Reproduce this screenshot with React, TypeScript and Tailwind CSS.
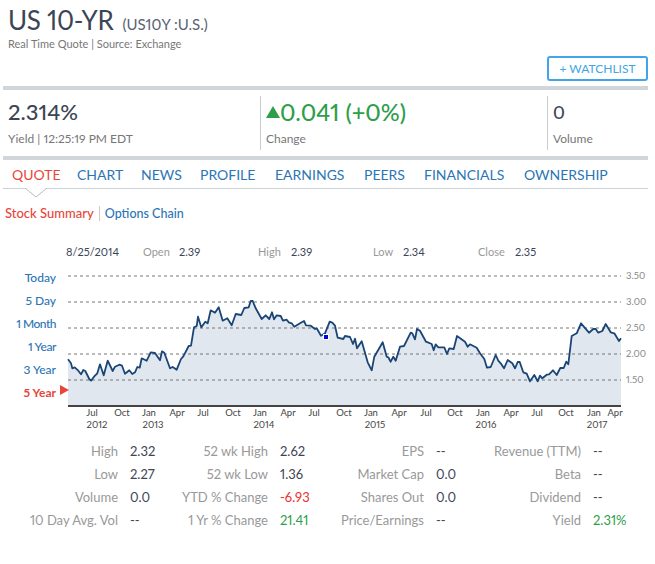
const lineZoomA =
  "204,373 213,385 217,400 224,397 235,407 243,418 250,405 256,408 268,432 273,437 282,425 292,415 300,388 311,421 323,377 338,408 345,395 358,389 366,392 375,416 388,406 397,417 405,412 412,396 419,398 425,370 440,377 452,352 465,354 480,376 486,349 493,353 510,400 518,396 530,404 543,372 550,364 566,333 573,332 582,277 590,273 594,245 604,277 616,260 623,265 632,226 645,233 656,217 668,257 682,250 695,271 707,237 724,240 733,219 746,217 752,198 758,198 767,220 785,252 797,241 808,252 816,232 822,253 830,241 842,243 849,257 860,254 866,262 875,265 883,275 900,265 912,258 918,271 932,272 945,282 950,280 963,302 975,295"
const lineZoomB =
  "14,260 22,263 30,272 38,308 55,312 60,303 75,306 84,327 90,311 96,340 110,319 128,382 140,406 148,365 173,322 185,365 190,367 197,380 205,365 212,377 225,335 237,333 257,293 262,295 270,313 276,282 285,287 303,320 320,327 326,346 332,328 340,337 358,337 366,357 373,340 386,342 396,303 420,320 428,335 435,328 455,338 465,355 478,372 486,398 497,396 512,360 520,377 527,385 537,400 548,375 562,385 570,400 578,381 584,381 595,412 605,416 615,439 628,420 638,439 645,422 652,430 665,419 672,418 684,406 695,420 706,399 716,399 724,380 730,388 740,303 755,295 768,265 792,293 805,282 812,282 820,293 832,288 842,267 857,292 868,295 882,318 888,310"

const toPoints = (raw: string, offset: number) =>
  raw.split(" ").map((p) => {
    const [x, y] = p.split(",").map(Number)
    return [(x + offset) / 3, 235 + y / 3] as const
  })

const points = [...toPoints(lineZoomA, 0), ...toPoints(lineZoomB, 975)]
const linePath = points.map(([x, y]) => `${x.toFixed(1)},${y.toFixed(1)}`).join(" ")
const areaPath = `68,405 ${linePath} 621,405`

const gridLines = [
  { y: 276, label: "3.50" },
  { y: 302, label: "3.00" },
  { y: 328, label: "2.50" },
  { y: 354, label: "2.00" },
  { y: 380, label: "1.50" },
]
const months: [string, number][] = [
  ["Jul", 92], ["Oct", 122], ["Jan", 149], ["Apr", 177], ["Jul", 203], ["Oct", 233], ["Jan", 260],
  ["Apr", 288], ["Jul", 314], ["Oct", 344], ["Jan", 371], ["Apr", 399], ["Jul", 426], ["Oct", 455],
  ["Jan", 483], ["Apr", 511], ["Jul", 537], ["Oct", 566], ["Jan", 594], ["Apr", 615],
]
const years: [string, number][] = [
  ["2012", 97], ["2013", 153], ["2014", 264], ["2015", 375], ["2016", 486], ["2017", 597],
]

const tabs = [
  { label: "Chart", cls: "w-[64px]" },
  { label: "News", cls: "w-[59px]" },
  { label: "Profile", cls: "w-[75px]" },
  { label: "Earnings", cls: "w-[89px]" },
  { label: "Peers", cls: "w-[60px]" },
  { label: "Financials", cls: "w-[100px]" },
  { label: "Ownership", cls: "" },
]
const ranges = [
  { label: "Today", cls: "" },
  { label: "5 Day", cls: "" },
  { label: "1 Month", cls: "tracking-[-0.5px]" },
  { label: "1 Year", cls: "tracking-[-0.4px]" },
  { label: "3 Year", cls: "" },
]
const ohlc = [
  { label: "Open", value: "2.39", cls: "w-[115px]", labelCls: "w-[36px]" },
  { label: "High", value: "2.39", cls: "w-[115px]", labelCls: "w-[33px]" },
  { label: "Low", value: "2.34", cls: "w-[105px]", labelCls: "w-[30px]" },
  { label: "Close", value: "2.35", cls: "w-[100px]", labelCls: "w-[37px]" },
]

const stats: { label: string; value: string; cls?: string }[][] = [
  [
    { label: "High", value: "2.32" },
    { label: "52 wk High", value: "2.62" },
    { label: "EPS", value: "--" },
    { label: "Revenue (TTM)", value: "--" },
  ],
  [
    { label: "Low", value: "2.27" },
    { label: "52 wk Low", value: "1.36" },
    { label: "Market Cap", value: "0.0" },
    { label: "Beta", value: "--" },
  ],
  [
    { label: "Volume", value: "0.0" },
    { label: "YTD % Change", value: "-6.93", cls: "text-[#ee2e2e]" },
    { label: "Shares Out", value: "0.0" },
    { label: "Dividend", value: "--" },
  ],
  [
    { label: "10 Day Avg. Vol", value: "--" },
    { label: "1 Yr % Change", value: "21.41", cls: "text-[#2e9e4a]" },
    { label: "Price/Earnings", value: "--" },
    { label: "Yield", value: "2.31%", cls: "text-[#2e9e4a]" },
  ],
]

const App: React.FC = () => {
  return (
    <div className="h-[564px] w-[655px] overflow-hidden bg-white font-['Lato',sans-serif] text-[#3c4556] proportional-nums">
      <header className="flex h-[86px] flex-col pl-2 pr-[7px] pt-[3px]">
        <div className="flex items-baseline gap-[9px]">
          <h1 className="text-[26px] leading-[34px] tracking-[-0.3px]">US 10-YR</h1>
          <span className="text-[15px] text-[#5a6272]">(US10Y :U.S.)</span>
        </div>
        <p className="text-[11px] leading-[14px] text-[#777]">Real Time Quote | Source: Exchange</p>
        <div className="mt-[5px] flex justify-end">
          <button className="h-[25px] w-[101px] rounded-[3px] border-2 border-[#42a5e8] text-[12px] text-[#42a5e8]">
            + WATCHLIST
          </button>
        </div>
      </header>

      <section className="ml-[3px] mr-[7px] flex h-[74px] items-center border-y-4 border-[#d0d6da]">
        <div className="h-[54px] w-[257px] pl-[5px]">
          <div className="mt-[1px] text-[22px] font-medium leading-[30px]">2.314%</div>
          <div className="mt-[4px] text-[12px] leading-[16px] text-[#777]">Yield | 12:25:19 PM EDT</div>
        </div>
        <div className="h-[54px] w-[287px] border-l border-[#ccc] pl-[5px]">
          <div className="mt-[1px] flex items-center text-[23.5px] font-medium leading-[30px] text-[#2e9e4a]">
            <span className="h-0 w-0 border-x-[7px] border-b-[12px] border-x-transparent border-b-[#2e9e4a]" />
            0.041 (+0%)
          </div>
          <div className="mt-[4px] text-[12px] leading-[16px] text-[#777]">Change</div>
        </div>
        <div className="h-[54px] flex-1 border-l border-[#ccc] pl-[5px]">
          <div className="mt-[1px] text-[18px] font-medium leading-[30px]">0</div>
          <div className="mt-[4px] text-[12px] leading-[16px] text-[#777]">Volume</div>
        </div>
      </section>

      <nav className="relative ml-[3px] mr-[7px] flex h-[29px] items-center border-b border-[#ccd3d8] pl-[9px] text-[14px] uppercase text-[#2b75b5]">
        <a className="w-[65px] text-[#e8463a]">Quote</a>
        {tabs.map((t) => (
          <a key={t.label} className={t.cls}>
            {t.label}
          </a>
        ))}
        <svg className="absolute left-[22px] top-[28px] h-[10px] w-[22px]" viewBox="0 0 22 10">
          <polygon points="0,0 11,9 22,0" fill="#fff" />
          <polyline points="0,0 11,9 22,0" fill="none" stroke="#b5bcc2" />
        </svg>
      </nav>

      <div className="mt-[17px] flex items-center pl-[5px] font-medium leading-[15px]">
        <a className="border-r border-[#ccc] pr-[5px] text-[13px] text-[#e8463a]">Stock Summary</a>
        <a className="pl-[5px] text-[12.5px] text-[#2b75b5]">Options Chain</a>
      </div>

      <div className="mt-[24px] flex items-center pl-[66px] text-[11px] leading-[14px]">
        <span className="w-[77px]">8/25/2014</span>
        {ohlc.map((o) => (
          <span key={o.label} className={`flex ${o.cls}`}>
            <span className={`${o.labelCls} text-[#999]`}>{o.label}</span>
            <span>{o.value}</span>
          </span>
        ))}
      </div>

      <div className="mt-[6px] flex h-[170px]">
        <ul className="mt-[1px] w-[56px] text-right text-[12px] font-medium leading-[23px] text-[#2b75b5]">
          {ranges.map((r) => (
            <li key={r.label} className={r.cls}>
              {r.label}
            </li>
          ))}
          <li className="font-bold text-[#e8463a]">5 Year</li>
        </ul>
        <svg className="ml-[4px] h-[170px] w-[590px]" viewBox="60 265 590 170">
          {gridLines.map((g) => (
            <text key={g.y} x="626" y={g.y + 3} fontSize="9.5" fill="#888">
              {g.label}
            </text>
          ))}
          <polygon points={areaPath} fill="#e1e7ee" />
          {gridLines.map((g) => (
            <line key={g.y} x1="68" x2="621" y1={g.y} y2={g.y} stroke="#777" strokeDasharray="3 3" />
          ))}
          <polyline points={linePath} fill="none" stroke="#1a4576" strokeWidth="1.8" strokeLinejoin="round" />
          <rect x="68" y="405" width="553" height="2" fill="#444" />
          <rect x="323.5" y="334.5" width="5" height="5" fill="#0000e0" stroke="#fff" />
          <polygon points="60,385 69,390 60,395" fill="#e8463a" />
          {months.map(([m, x], i) => (
            <text key={i} x={x} y="416" fontSize="9.5" fill="#444" textAnchor="middle">
              {m}
            </text>
          ))}
          {years.map(([y, x]) => (
            <text key={y} x={x} y="428" fontSize="9.5" fill="#444" textAnchor="middle">
              {y}
            </text>
          ))}
        </svg>
      </div>

      <div className="mt-[5px] grid grid-cols-[118px_30px_96px_30px_102px_30px_103px_40px] gap-x-[12px] text-[13px] leading-[23px]">
        {stats.flat().map((s) => (
          <div key={s.label} className="contents">
            <div className="whitespace-nowrap text-right text-[#999]">{s.label}</div>
            <div className={s.cls ?? ""}>{s.value}</div>
          </div>
        ))}
      </div>
    </div>
  )
}

export default App
